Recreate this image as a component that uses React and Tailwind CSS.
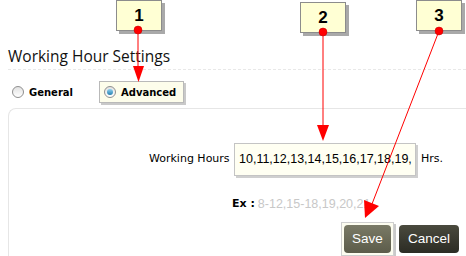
import React from "react"

function Radio({ checked }) {
  return (
    <span className="relative inline-flex h-[12px] w-[12px] items-center justify-center rounded-full border border-[#8f8f8f] bg-gradient-to-b from-[#e2e2e2] to-[#ffffff]">
      {checked && <span className="h-[6px] w-[6px] rounded-full bg-gradient-to-b from-[#8fd2f0] to-[#1f7fb0]" />}
    </span>
  )
}

function Callout({ n, left, top }) {
  return (
    <div
      className="absolute flex h-[31px] w-[46px] items-center justify-center border border-[#8c8c8c] bg-[#ffffd4] text-[17px] font-bold text-black shadow-[3px_3px_0_#a9a9a9]"
      style={{ left, top, fontFamily: "'Liberation Sans', Arial, sans-serif" }}
    >
      {n}
    </div>
  )
}

const liberation = { fontFamily: "'Liberation Sans', Arial, sans-serif" }

export default function App() {
  return (
    <div
      className="relative h-[256px] w-[466px] overflow-hidden bg-white text-black"
      style={{ fontFamily: "'DejaVu Sans', Verdana, sans-serif" }}
    >
      <div className="pl-2 pt-[47px]">
        <h1 className="text-[15.5px] leading-[18px] text-[#111]" style={{ fontFamily: "'Open Sans', sans-serif" }}>
          Working Hour Settings
        </h1>
        <div className="mt-[4px] border-b border-dashed border-[#e8e8e8]" />
      </div>

      <div className="flex items-center pl-[12px] pt-[11px]">
        <label className="flex items-center gap-[5px] text-[10px] font-bold">
          <Radio />
          <span>General</span>
        </label>
        <label className="ml-[26px] flex h-[22px] items-center gap-[5px] border border-[#b9b9b9] bg-[#fdfdeb] pl-[4px] pr-[7px] text-[10px] font-bold shadow-[2px_2px_0_#c9c9c9]">
          <Radio checked />
          <span>Advanced</span>
        </label>
      </div>

      <div className="ml-2 mt-[5px] h-[200px] rounded-tl-lg border-l border-t border-[#e6e6e6]">
        <div className="flex items-center pl-[140px] pt-[34px]">
          <span className="w-[85px] shrink-0 whitespace-nowrap text-[11px]">Working Hours</span>
          <div
            className="flex h-[33px] w-[182px] shrink-0 items-center whitespace-nowrap border border-[#c4c4c4] bg-[#fffff2] pl-[4px] text-[12.5px] shadow-[2px_2px_0_#cfcfcf]"
            style={liberation}
          >
            10,11,12,13,14,15,16,17,18,19,
          </div>
          <span className="ml-[5px] whitespace-nowrap text-[11px]">Hrs.</span>
        </div>

        <div className="flex items-center pl-[223px] pt-[19px]">
          <span className="text-[11px] font-bold">Ex :</span>
          <span className="ml-[3px] whitespace-nowrap text-[12.5px] text-[#c8c8c8]" style={liberation}>
            8-12,15-18,19,20,21
          </span>
        </div>

        <div className="flex items-center pl-[332px] pt-[8px]">
          <div className="border border-[#cfcfcf] bg-[#fdfdf0] p-[2px] shadow-[2px_2px_0_#c9c9c9]">
            <button
              className="flex h-[28px] w-[47px] items-center justify-center rounded-[4px] bg-gradient-to-b from-[#7a7a66] to-[#5c5c4a] text-[13.5px] text-white"
              style={liberation}
            >
              Save
            </button>
          </div>
          <button
            className="ml-[5px] flex h-[28px] w-[60px] items-center justify-center rounded-[4px] bg-gradient-to-b from-[#4a4a3e] to-[#2c2c24] text-[13.5px] text-white"
            style={liberation}
          >
            Cancel
          </button>
        </div>
      </div>

      <svg className="pointer-events-none absolute left-0 top-0" width="466" height="256">
        <line x1="138" y1="30" x2="138" y2="68" stroke="#ff0000" strokeWidth="1" />
        <polygon points="133,66 144,66 138.5,82" fill="#ff0000" />
        <line x1="323" y1="32" x2="323" y2="127" stroke="#ff0000" strokeWidth="1" />
        <polygon points="317,125 329,125 323,141" fill="#ff0000" />
        <line x1="439" y1="31" x2="372" y2="204" stroke="#ff0000" strokeWidth="1" />
        <polygon points="364,200 379,206 365,218" fill="#ff0000" />
      </svg>

      <Callout n="1" left={116} top={0} />
      <Callout n="2" left={300} top={2} />
      <Callout n="3" left={416} top={0} />

      <svg className="pointer-events-none absolute left-0 top-0" width="466" height="256">
        <circle cx="138" cy="30" r="4" fill="#ff0000" stroke="#c00000" strokeWidth="0.5" />
        <circle cx="323" cy="32" r="4" fill="#ff0000" stroke="#c00000" strokeWidth="0.5" />
        <circle cx="439" cy="31" r="4" fill="#ff0000" stroke="#c00000" strokeWidth="0.5" />
      </svg>
    </div>
  )
}
